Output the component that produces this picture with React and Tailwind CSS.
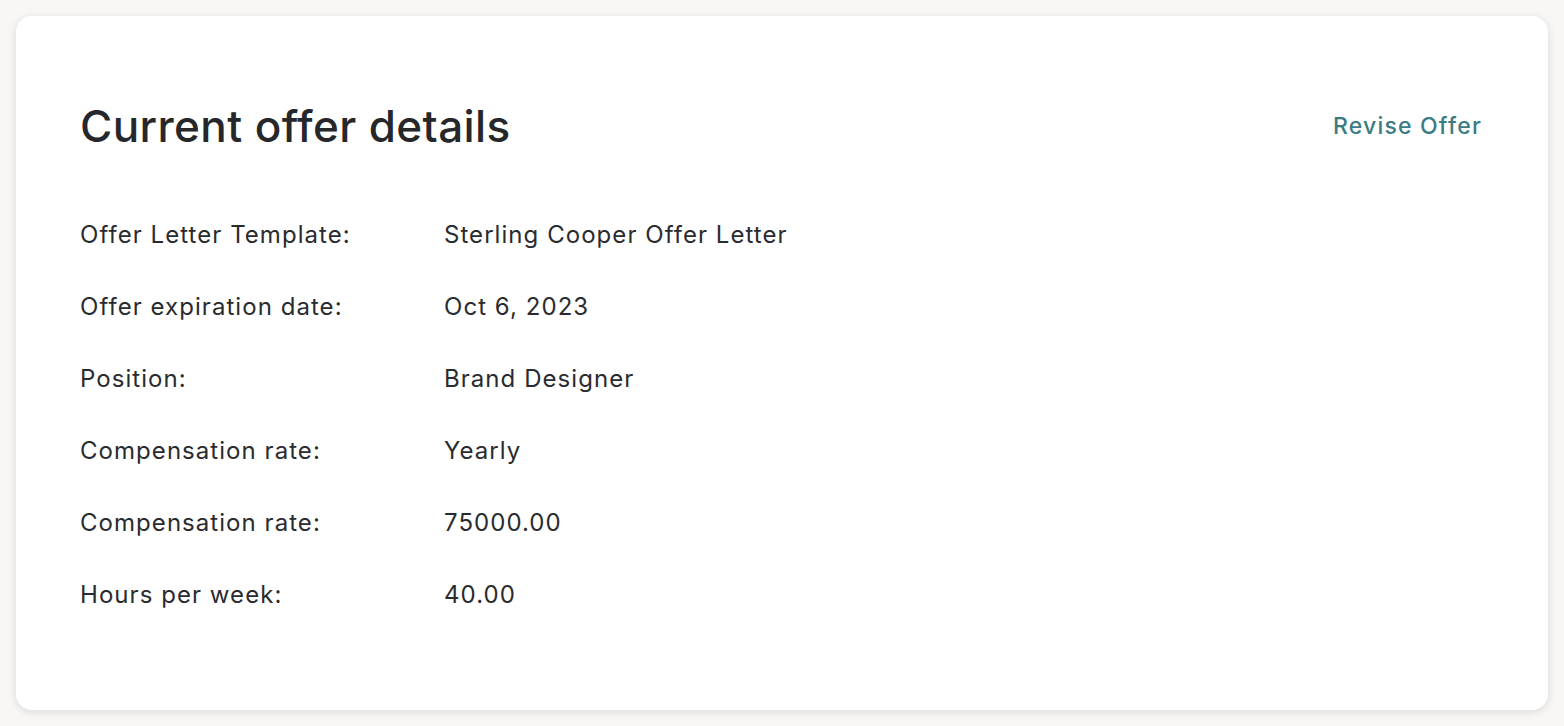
export default function App() {
  const rows = [
    ['Offer Letter Template:', 'Sterling Cooper Offer Letter'],
    ['Offer expiration date:', 'Oct 6, 2023'],
    ['Position:', 'Brand Designer'],
    ['Compensation rate:', 'Yearly'],
    ['Compensation rate:', '75000.00'],
    ['Hours per week:', '40.00'],
  ]

  return (
    <div className="min-h-[726px] bg-[#f8f7f5] p-4" style={{ fontFamily: 'Inter, "Noto Sans", sans-serif' }}>
      <div className="bg-white rounded-2xl shadow-[0_2px_10px_rgba(0,0,0,0.12)] px-16 pt-[92px] pb-[101px]">
        <div className="flex items-center justify-between">
          <h1 className="text-[44px] leading-[36px] font-medium text-[#26272b] tracking-[0.4px]">Current offer details</h1>
          <button className="text-[23px] leading-[36px] font-medium text-[#3b7c83] tracking-[1.2px] mr-[2px]">Revise Offer</button>
        </div>
        <div className="mt-[77px] flex flex-col gap-[44px]">
          {rows.map(([label, value], i) => (
            <div key={i} className="flex text-[24px] leading-[28px] text-[#2a2b2f] tracking-[1.05px]">
              <div className="w-[364px] flex-shrink-0">{label}</div>
              <div>{value}</div>
            </div>
          ))}
        </div>
      </div>
    </div>
  )
}
